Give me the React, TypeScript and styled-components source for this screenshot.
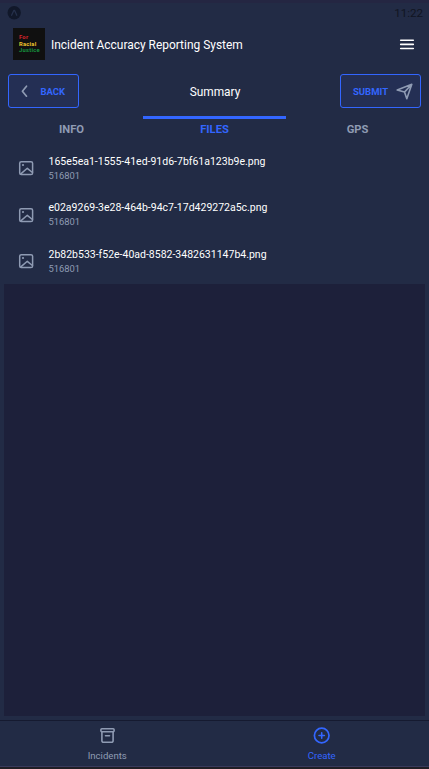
import React from "react";
import styled, { createGlobalStyle } from "styled-components";

const color = {
  surface: "#222b45",
  panel: "#1d203a",
  divider: "#151a30",
  hint: "#8f9bb3",
  primary: "#3366ff",
};

const GlobalStyle = createGlobalStyle`
  * { box-sizing: border-box; }
  body { margin: 0; background: ${color.surface}; }
`;

const Screen = styled.div`
  width: 100%;
  height: 769px;
  display: flex;
  flex-direction: column;
  overflow: hidden;
  background: ${color.surface};
  border-top: 3px solid #242642;
  color: #fff;
  font-family: Roboto, sans-serif;
`;

const StatusBar = styled.div`
  height: 20px;
  flex: none;
  display: flex;
  justify-content: space-between;
  padding: 3px 6px 0 7px;
  color: #111522;
  font-size: 11.6px;
  line-height: 15px;
`;

const Header = styled.header`
  height: 42px;
  flex: none;
  display: flex;
  align-items: center;
  padding: 0 14px 0 13px;
`;

const Logo = styled.div`
  width: 32px;
  height: 32px;
  padding: 6px 0 0 6px;
  background: #101010;
  font-size: 5.8px;
  font-weight: 700;
  line-height: 7px;
  letter-spacing: 0.25px;
`;

const LogoLine = styled.div<{ $tint: string }>`
  height: 6.5px;
  color: ${(p) => p.$tint};
  white-space: nowrap;
`;

const AppName = styled.h1`
  flex: 1;
  margin: 2px 0 0 6px;
  font-size: 11.95px;
  font-weight: 400;
  line-height: 16px;
`;

const Toolbar = styled.div`
  height: 51px;
  flex: none;
  display: grid;
  grid-template-columns: 1fr auto 1fr;
  align-items: center;
  padding: 1px 8px 0;
`;

const ToolbarTitle = styled.h2`
  margin: 2px 0 0 1px;
  font-size: 11.9px;
  font-weight: 400;
  line-height: 16px;
`;

const Button = styled.button<{ $end?: boolean }>`
  justify-self: ${(p) => (p.$end ? "end" : "start")};
  width: ${(p) => (p.$end ? 81.5 : 71)}px;
  height: 34px;
  display: flex;
  align-items: center;
  justify-content: space-between;
  padding: ${(p) => (p.$end ? "0 7px 0 12.5px" : "0 13px 0 7px")};
  border: 1px solid ${color.primary};
  border-radius: 3px;
  background: #242f54;
  color: ${color.primary};
  font: 700 9.5px Roboto, sans-serif;
`;

const TabBar = styled.nav`
  height: 29px;
  flex: none;
  display: grid;
  grid-template-columns: repeat(3, 1fr);
`;

const Tab = styled.div<{ $active?: boolean }>`
  border-top: 3px solid ${(p) => (p.$active ? color.primary : "transparent")};
  padding-top: 3px;
  color: ${(p) => (p.$active ? color.primary : color.hint)};
  text-align: center;
  font-size: 11.2px;
  font-weight: 700;
  line-height: 15px;
`;

const FileList = styled.div`
  height: 139px;
  flex: none;
`;

const FileRow = styled.div`
  height: 46.5px;
  display: flex;
  align-items: center;
  padding-left: 18px;
`;

const FileText = styled.div`
  margin-left: 14.5px;
`;

const FileName = styled.div`
  font-size: 10.5px;
  line-height: 14px;
  white-space: nowrap;
`;

const FileSize = styled.div`
  color: ${color.hint};
  font-size: 9.4px;
  line-height: 13px;
`;

const Panel = styled.div`
  height: 432px;
  flex: none;
  margin: 0 4px 4px;
  background: ${color.panel};
`;

const BottomNav = styled.nav`
  height: 49px;
  flex: none;
  display: grid;
  grid-template-columns: 1fr 1fr;
  border-top: 1px solid ${color.divider};
  border-bottom: 2px solid #201e25;
  box-shadow: inset 0 -1px #393a5c;
`;

const NavItem = styled.div<{ $active?: boolean }>`
  display: flex;
  flex-direction: column;
  align-items: center;
  padding-top: 5px;
  color: ${(p) => (p.$active ? color.primary : color.hint)};
  font-size: 9.6px;
  line-height: 13px;
  gap: 4px;
`;

const Icon = styled.svg<{ $size: number; $tint?: string }>`
  width: ${(p) => p.$size}px;
  height: ${(p) => p.$size}px;
  flex: none;
  display: block;
  fill: none;
  stroke: currentColor;
  stroke-width: 2;
  stroke-linecap: round;
  stroke-linejoin: round;
  color: ${(p) => p.$tint ?? "inherit"};
`;

const files = [
  "165e5ea1-1555-41ed-91d6-7bf61a123b9e.png",
  "e02a9269-3e28-464b-94c7-17d429272a5c.png",
  "2b82b533-f52e-40ad-8582-3482631147b4.png",
];

export default function App() {
  return (
    <>
      <GlobalStyle />
      <Screen>
        <StatusBar>
          <Icon $size={14} viewBox="0 0 14 14">
            <circle cx="7.2" cy="6.7" r="6.7" fill="#11182a" stroke="none" />
            <path d="M4.6 9.2 6.8 4.5h.8l2.2 4.7" stroke="#25304b" strokeWidth="1.3" />
          </Icon>
          <span>11:22</span>
        </StatusBar>
        <Header>
          <Logo>
            <LogoLine $tint="#d8232b">For</LogoLine>
            <LogoLine $tint="#f1c62c">Racial</LogoLine>
            <LogoLine $tint="#16923e">Justice</LogoLine>
          </Logo>
          <AppName>Incident Accuracy Reporting System</AppName>
          <Icon $size={16} viewBox="0 0 16 16">
            <path d="M1.7 4.3h12.6M1.7 8.4h12.6M1.7 12.5h12.6" strokeWidth="1.6" />
          </Icon>
        </Header>
        <Toolbar>
          <Button>
            <Icon $size={16} $tint={color.hint} viewBox="0 0 16 16">
              <path d="M10.5 3.2 6.4 8.2l4.1 5" strokeWidth="1.7" />
            </Icon>
            BACK
          </Button>
          <ToolbarTitle>Summary</ToolbarTitle>
          <Button $end>
            SUBMIT
            <Icon $size={17} $tint={color.hint} viewBox="0 0 17 17">
              <path d="M1.2 7 15.8 1.3 10.8 15.8 8.5 9.1ZM8.5 9.1 15.8 1.3" strokeWidth="1.6" />
            </Icon>
          </Button>
        </Toolbar>
        <TabBar>
          <Tab>INFO</Tab>
          <Tab $active>FILES</Tab>
          <Tab>GPS</Tab>
        </TabBar>
        <FileList>
          {files.map((name) => (
            <FileRow key={name}>
              <Icon $size={16} $tint={color.hint} viewBox="0 0 16 16">
                <rect x="1.7" y="1.7" width="12.9" height="12.9" rx="1.6" strokeWidth="1.5" />
                <circle cx="5" cy="5" r="1.1" fill="currentColor" stroke="none" />
                <path d="m2.8 13.9 6.5-5.6 5.1 4.2" strokeWidth="1.5" />
              </Icon>
              <FileText>
                <FileName>{name}</FileName>
                <FileSize>516801</FileSize>
              </FileText>
            </FileRow>
          ))}
        </FileList>
        <Panel />
        <BottomNav>
          <NavItem>
            <Icon $size={19} viewBox="0 0 19 19">
              <rect x="2.9" y="2.7" width="13.2" height="3" rx="1" strokeWidth="1.6" />
              <path d="M3.9 5.7v9a1.6 1.6 0 0 0 1.6 1.6h8a1.6 1.6 0 0 0 1.6-1.6v-9M7.5 9.8h4" strokeWidth="1.6" />
            </Icon>
            Incidents
          </NavItem>
          <NavItem $active>
            <Icon $size={19} viewBox="0 0 19 19">
              <circle cx="9.7" cy="9.5" r="7.3" strokeWidth="1.7" />
              <path d="M9.7 6.8v5.4M7 9.5h5.4" strokeWidth="1.6" />
            </Icon>
            Create
          </NavItem>
        </BottomNav>
      </Screen>
    </>
  );
}
